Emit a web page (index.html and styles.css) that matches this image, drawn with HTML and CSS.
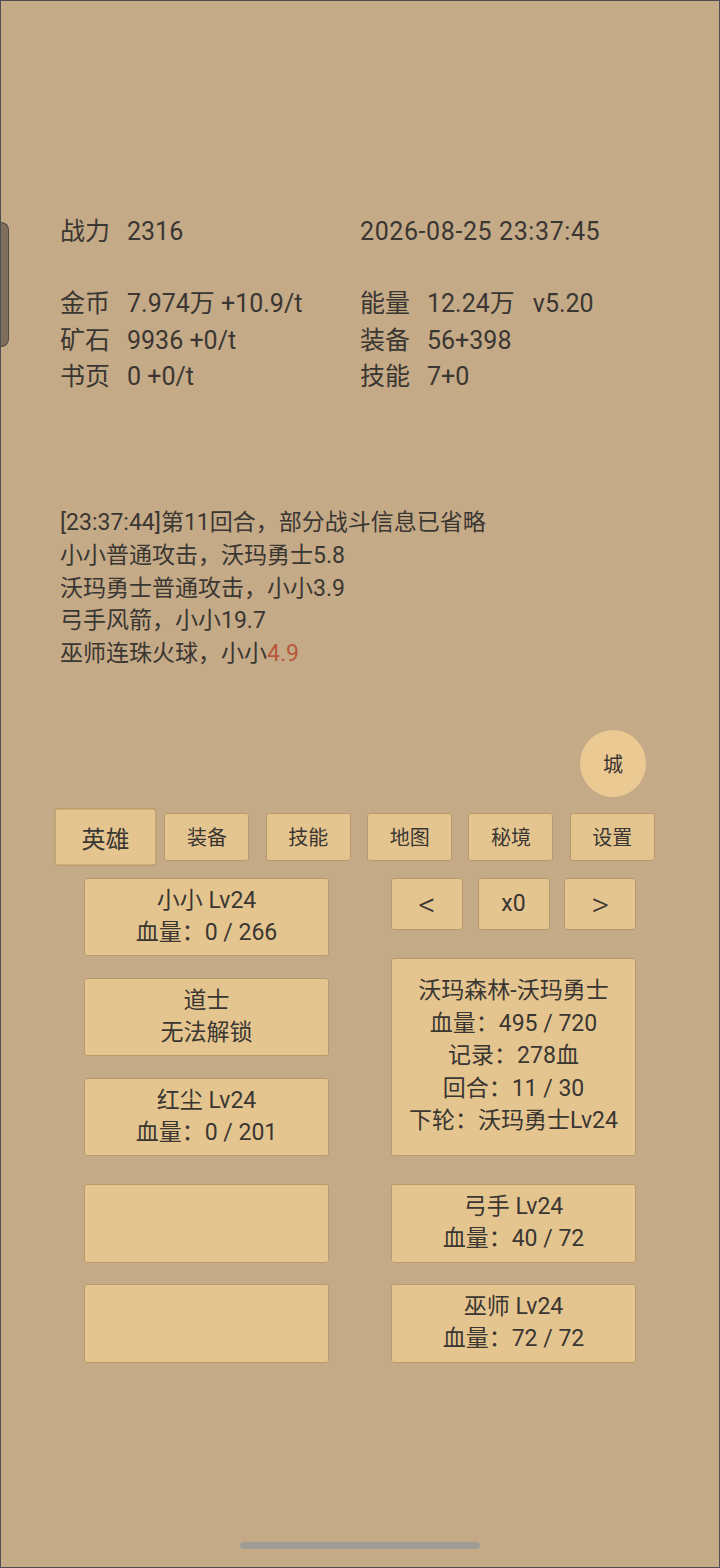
FILE: index.html
```html
<!DOCTYPE html>
<html lang="zh-CN">

<head>
  <meta charset="UTF-8">
  <meta name="viewport" content="width=device-width, initial-scale=1.0">
  <title>放置英雄</title>
  <link rel="stylesheet" href="styles.css">
</head>

<body>
  <div class="screen">
    <div class="edge-tab"></div>

    <section class="stats">
      <div class="stat"><span class="label">战力</span>2316</div>
      <div class="stat clock">2026-08-25 23:37:45</div>
      <div class="spacer"></div>
      <div class="stat"><span class="label">金币</span>7.974万 +10.9/t</div>
      <div class="stat"><span class="label">能量</span>12.24万<span class="ver">v5.20</span></div>
      <div class="stat"><span class="label">矿石</span>9936 +0/t</div>
      <div class="stat"><span class="label">装备</span>56+398</div>
      <div class="stat"><span class="label">书页</span>0 +0/t</div>
      <div class="stat"><span class="label">技能</span>7+0</div>
    </section>

    <section class="log">
      <div>[23:37:44]第11回合，部分战斗信息已省略</div>
      <div>小小普通攻击，沃玛勇士5.8</div>
      <div>沃玛勇士普通攻击，小小3.9</div>
      <div>弓手风箭，小小19.7</div>
      <div>巫师连珠火球，小小<span class="crit">4.9</span></div>
    </section>

    <div class="city-row">
      <button type="button" class="city">城</button>
    </div>

    <nav class="tabs">
      <button type="button" class="tab active">英雄</button>
      <button type="button" class="tab">装备</button>
      <button type="button" class="tab">技能</button>
      <button type="button" class="tab">地图</button>
      <button type="button" class="tab">秘境</button>
      <button type="button" class="tab">设置</button>
    </nav>

    <div class="board">
      <div class="column heroes">
        <div class="card"><div>小小 Lv24</div><div>血量：0 / 266</div></div>
        <div class="card"><div>道士</div><div>无法解锁</div></div>
        <div class="card"><div>红尘 Lv24</div><div>血量：0 / 201</div></div>
      </div>
      <div class="column enemy">
        <div class="controls">
          <button type="button" class="ctrl arrow">&lt;</button>
          <button type="button" class="ctrl">x0</button>
          <button type="button" class="ctrl arrow">&gt;</button>
        </div>
        <div class="card boss">
          <div>沃玛森林-沃玛勇士</div>
          <div>血量：495 / 720</div>
          <div>记录：278血</div>
          <div>回合：11 / 30</div>
          <div>下轮：沃玛勇士Lv24</div>
        </div>
      </div>
    </div>

    <div class="board lower">
      <div class="card"></div>
      <div class="card"><div>弓手 Lv24</div><div>血量：40 / 72</div></div>
      <div class="card"></div>
      <div class="card"><div>巫师 Lv24</div><div>血量：72 / 72</div></div>
    </div>

    <div class="home-bar"></div>
  </div>
</body>

</html>
```

FILE: styles.css
```css
body {
  margin: 0;
  background: #c5aa87;
  font-family: Roboto, "Noto Sans CJK SC", sans-serif;
  color: #3a3632;
}

button {
  font-family: inherit;
  color: inherit;
  cursor: pointer;
}

.screen {
  position: relative;
  width: 720px;
  height: 1568px;
  box-sizing: border-box;
  border: 1px solid #4f4f4f;
  padding-top: 213px;
  overflow: hidden;
}

/* side handle of the phone */
.edge-tab {
  position: absolute;
  left: -1px;
  top: 221px;
  width: 8px;
  height: 123px;
  background: rgba(40, 40, 40, 0.45);
  border: 1px solid rgba(40, 40, 40, 0.55);
  border-left: none;
  border-radius: 0 8px 8px 0;
}

.stats {
  display: grid;
  grid-template-columns: 300px 1fr;
  margin-left: 59px;
  font-size: 25px;
  line-height: 36.3px;
}

.stats .spacer {
  grid-column: span 2;
  height: 36px;
}

.clock {
  letter-spacing: 0.6px;
}

.label {
  display: inline-block;
  width: 67px;
}

.ver {
  margin-left: 18px;
}

.log {
  margin: 112px 0 0 59px;
  font-size: 23px;
  line-height: 32.7px;
}

.crit {
  color: #b9573b;
}

.city-row {
  display: flex;
  justify-content: flex-end;
  margin-top: 59px;
  padding-right: 73px;
}

.city {
  width: 66px;
  height: 67px;
  border: none;
  border-radius: 50%;
  background: #ebc992;
  font-size: 20px;
  padding: 0;
}

.tabs {
  display: grid;
  grid-template-columns: repeat(6, 1fr);
  justify-items: center;
  width: 608px;
  margin: 16px 0 0 54px;
}

.tab {
  width: 85px;
  height: 48px;
  padding: 0;
  background: #e5c58f;
  border: 1px solid #b8996b;
  border-radius: 3px;
  font-size: 20px;
}

.tab.active {
  transform: scale(1.2);
}

.board {
  display: grid;
  grid-template-columns: 245px 245px;
  column-gap: 62px;
  margin: 17px 0 0 83px;
}

.board.lower {
  margin-top: 28px;
  row-gap: 21px;
}

.column {
  display: flex;
  flex-direction: column;
}

.heroes {
  gap: 22px;
}

.enemy {
  gap: 28px;
}

.card {
  display: flex;
  flex-direction: column;
  justify-content: center;
  align-items: center;
  height: 78px;
  box-sizing: border-box;
  background: #e5c58f;
  border: 1px solid #b8996b;
  border-radius: 3px;
  font-size: 23px;
  line-height: 32px;
}

.lower .card {
  height: 79px;
}

.card.boss {
  height: 198px;
  line-height: 32.5px;
}

.controls {
  display: grid;
  grid-template-columns: repeat(3, 1fr);
  gap: 14.5px;
}

.ctrl {
  height: 52px;
  padding: 0;
  background: #e5c58f;
  border: 1px solid #b8996b;
  border-radius: 3px;
  font-size: 23px;
}

.ctrl.arrow {
  font-size: 34px;
  font-weight: 300;
}

.home-bar {
  position: absolute;
  left: 239px;
  bottom: 18px;
  width: 240px;
  height: 7px;
  border-radius: 4px;
  background: #a19b95;
}
```
